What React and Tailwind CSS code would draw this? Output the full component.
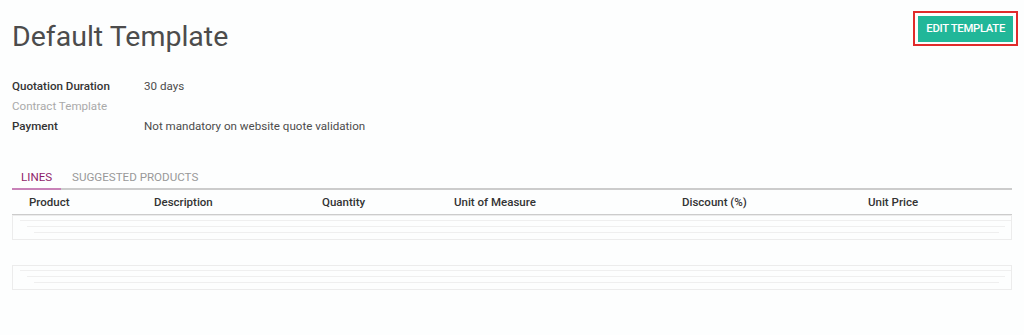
import React from "react";

const fields = [
  { label: "Quotation Duration", value: "30 days", muted: false },
  { label: "Contract Template", value: "", muted: true },
  { label: "Payment", value: "Not mandatory on website quote validation", muted: false },
];

const columns = [
  { name: "Product", w: "w-[142px]", pl: "pl-[17px]" },
  { name: "Description", w: "w-[168px]", pl: "" },
  { name: "Quantity", w: "w-[132px]", pl: "" },
  { name: "Unit of Measure", w: "w-[228px]", pl: "" },
  { name: "Discount (%)", w: "w-[186px]", pl: "" },
  { name: "Unit Price", w: "flex-1", pl: "" },
];

function FaintBlock() {
  return (
    <div className="border border-[#ececec] h-[25px] flex flex-col">
      <div className="ml-[7px] mt-[4px] border-t border-[#efefef]" />
      <div className="ml-[14px] mt-[5px] mr-[6px] border-t border-[#efefef]" />
      <div className="ml-[21px] mt-[5px] mr-[12px] border-t border-[#efefef]" />
    </div>
  );
}

export default function App() {
  return (
    <div
      className="w-[1024px] h-[335px] bg-[#fdfefe] px-[12px] pt-[11px] text-[#4c4c4c]"
      style={{ fontFamily: "Roboto, 'Noto Sans', sans-serif" }}
    >
      <div className="flex items-start justify-between">
        <h1 className="text-[28.5px] leading-[34px] mt-[9px] text-[#4c4c4c]">Default Template</h1>
        <div className="border-2 border-[#e02b2b] px-[3px] pt-[2px] pb-[2px] mr-[-6px]">
          <button className="bg-[#21b799] text-white text-[11.3px] tracking-[-0.3px] font-medium px-[8px] h-[26px] leading-[26px]">
            EDIT TEMPLATE
          </button>
        </div>
      </div>

      <div className="mt-[23px] flex flex-col text-[11.6px]">
        {fields.map((f) => (
          <div key={f.label} className="flex h-[20px] items-center">
            <div
              className={`w-[132px] ${
                f.muted ? "text-[#aaaaaa]" : "text-[#333333] font-medium"
              }`}
            >
              {f.label}
            </div>
            <div className="text-[#4c4c4c]">{f.value}</div>
          </div>
        ))}
      </div>

      <div className="mt-[32px] flex text-[11.6px] border-b-2 border-[#cccccc]">
        <div className="px-[9px] pb-[2px] text-[#8f1d6b] border-b-2 border-[#c882b8] mb-[-2px] w-[49px]">
          LINES
        </div>
        <div className="px-[11px] pb-[2px] text-[#999999]">SUGGESTED PRODUCTS</div>
      </div>

      <div className="flex h-[25px] items-center text-[11.5px] font-medium text-[#333333] border-b border-[#cccccc]">
        {columns.map((c) => (
          <div key={c.name} className={`${c.w} ${c.pl}`}>
            {c.name}
          </div>
        ))}
      </div>

      <FaintBlock />
      <div className="h-[25px]" />
      <FaintBlock />
    </div>
  );
}
